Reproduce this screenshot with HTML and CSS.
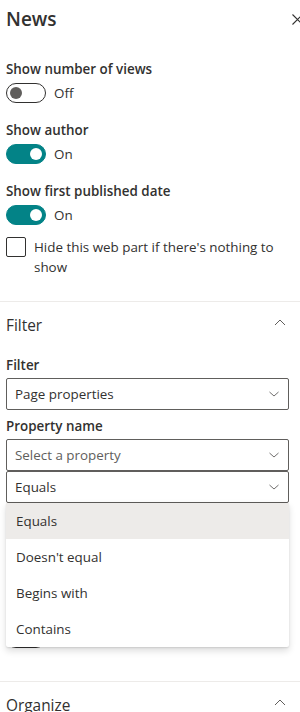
FILE: index.html
```html
<!DOCTYPE html>
<html lang="en">
<head>
	<meta charset="UTF-8">
	<title>News - property pane</title>
	<link rel="stylesheet" href="styles.css">
</head>
<body>
	<div class="panel">
		<div class="panel-head">
			<h2 class="panel-title">News</h2>
			<span class="close-btn">
				<svg width="11" height="11" viewBox="0 0 11 11"><path d="M0.5 0.5L10.5 10.5M10.5 0.5L0.5 10.5" stroke="#323130" stroke-width="1.1" fill="none"/></svg>
			</span>
		</div>

		<div class="group">
			<div class="field">
				<div class="field-label">Show number of views</div>
				<div class="toggle-row">
					<span class="toggle"><i></i></span>
					<span class="toggle-text">Off</span>
				</div>
			</div>
			<div class="field">
				<div class="field-label">Show author</div>
				<div class="toggle-row">
					<span class="toggle on"><i></i></span>
					<span class="toggle-text">On</span>
				</div>
			</div>
			<div class="field">
				<div class="field-label">Show first published date</div>
				<div class="toggle-row">
					<span class="toggle on"><i></i></span>
					<span class="toggle-text">On</span>
				</div>
			</div>
			<div class="check-row">
				<span class="checkbox"></span>
				<span class="check-text">Hide this web part if there's nothing to show</span>
			</div>
		</div>

		<!-- 筛选 -->
		<div class="section">
			<div class="section-head">
				<span>Filter</span>
				<svg class="chev-up" width="12" height="7" viewBox="0 0 12 7"><path d="M1 6L6 1L11 6" stroke="#605e5c" stroke-width="1" fill="none"/></svg>
			</div>
			<div class="section-body">
				<div class="field-label">Filter</div>
				<div class="dropdown">
					<span>Page properties</span>
					<svg width="10" height="6" viewBox="0 0 10 6"><path d="M0.5 1L5 5L9.5 1" stroke="#605e5c" stroke-width="0.9" fill="none"/></svg>
				</div>
				<div class="field-label mt">Property name</div>
				<div class="dropdown placeholder">
					<span>Select a property</span>
					<svg width="10" height="6" viewBox="0 0 10 6"><path d="M0.5 1L5 5L9.5 1" stroke="#605e5c" stroke-width="0.9" fill="none"/></svg>
				</div>
				<div class="dropdown-wrap">
					<div class="dropdown">
						<span>Equals</span>
						<svg width="10" height="6" viewBox="0 0 10 6"><path d="M0.5 1L5 5L9.5 1" stroke="#605e5c" stroke-width="0.9" fill="none"/></svg>
					</div>
					<ul class="callout">
						<li class="selected">Equals</li>
						<li>Doesn't equal</li>
						<li>Begins with</li>
						<li>Contains</li>
					</ul>
				</div>
				<div class="toggle-row under">
					<span class="toggle"><i></i></span>
				</div>
			</div>
		</div>

		<div class="section">
			<div class="section-head">
				<span>Organize</span>
				<svg class="chev-up" width="12" height="7" viewBox="0 0 12 7"><path d="M1 6L6 1L11 6" stroke="#605e5c" stroke-width="1" fill="none"/></svg>
			</div>
		</div>
	</div>
</body>
</html>
```

FILE: styles.css
```css
*{
	margin: 0;
	padding: 0;
	box-sizing: border-box;
}
html,body{
	overflow: hidden;
}
body{
	width: 300px;
	background: #fff;
	color: #323130;
	font-family: "Open Sans", "Noto Sans", sans-serif;
	font-size: 13.4px;
	line-height: 20px;
}
ul{
	list-style: none;
}
/*顶部标题*/
.panel-head{
	display: flex;
	justify-content: space-between;
	align-items: flex-start;
	padding: 5px 0 0 6px;
}
.panel-title{
	font-size: 19px;
	line-height: 28px;
	font-weight: 600;
}
.close-btn{
	display: block;
	margin-top: 9px;
	margin-right: -3px;
	height: 11px;
}
.close-btn svg{
	display: block;
}
/*开关和复选框*/
.group{
	padding: 26px 11px 24px 6px;
}
.field{
	margin-bottom: 17px;
}
.field-label{
	font-weight: 600;
}
.field-label.mt{
	margin-top: 6px;
}
.toggle-row{
	display: flex;
	align-items: center;
	gap: 8px;
	margin-top: 4px;
}
.toggle{
	position: relative;
	width: 40px;
	height: 20px;
	border: 1px solid #323130;
	border-radius: 10px;
	flex-shrink: 0;
}
.toggle i{
	position: absolute;
	top: 3px;
	left: 3px;
	width: 12px;
	height: 12px;
	border-radius: 50%;
	background: #605e5c;
}
.toggle.on{
	background: #038387;
	border-color: #038387;
}
.toggle.on i{
	left: auto;
	right: 3px;
	background: #fff;
}
.check-row{
	display: flex;
	align-items: flex-start;
	gap: 8px;
	margin-top: -5px;
}
.checkbox{
	width: 20px;
	height: 20px;
	border: 1px solid #323130;
	border-radius: 2px;
	flex-shrink: 0;
}
/*折叠分组*/
.section{
	border-top: 1px solid #edebe9;
}
.section-head{
	display: flex;
	justify-content: space-between;
	align-items: center;
	padding: 12px 14px 0 6px;
	font-size: 15.4px;
	line-height: 23px;
}
.chev-up{
	display: block;
	margin-top: -6px;
}
.section-body{
	padding: 18px 11px 33px 6px;
}
/*下拉框*/
.dropdown{
	display: flex;
	justify-content: space-between;
	align-items: center;
	height: 32px;
	margin-top: 3px;
	padding: 0 9px 0 8px;
	border: 1px solid #605e5c;
	border-radius: 2px;
}
.dropdown svg{
	display: block;
}
.dropdown.placeholder span{
	color: #605e5c;
}
.dropdown-wrap{
	position: relative;
}
.dropdown-wrap .dropdown{
	margin-top: 0;
}
.callout{
	position: absolute;
	top: 32px;
	left: 0;
	right: 0;
	z-index: 2;
	background: #fff;
	border-radius: 2px;
	box-shadow: 0 3.2px 7.2px 0 rgba(0,0,0,0.132), 0 0.6px 1.8px 0 rgba(0,0,0,0.108);
}
.callout li{
	height: 36px;
	line-height: 36px;
	padding-left: 10px;
}
.callout li.selected{
	background: #edebe9;
}
.toggle-row.under{
	margin-top: 125px;
}
```
